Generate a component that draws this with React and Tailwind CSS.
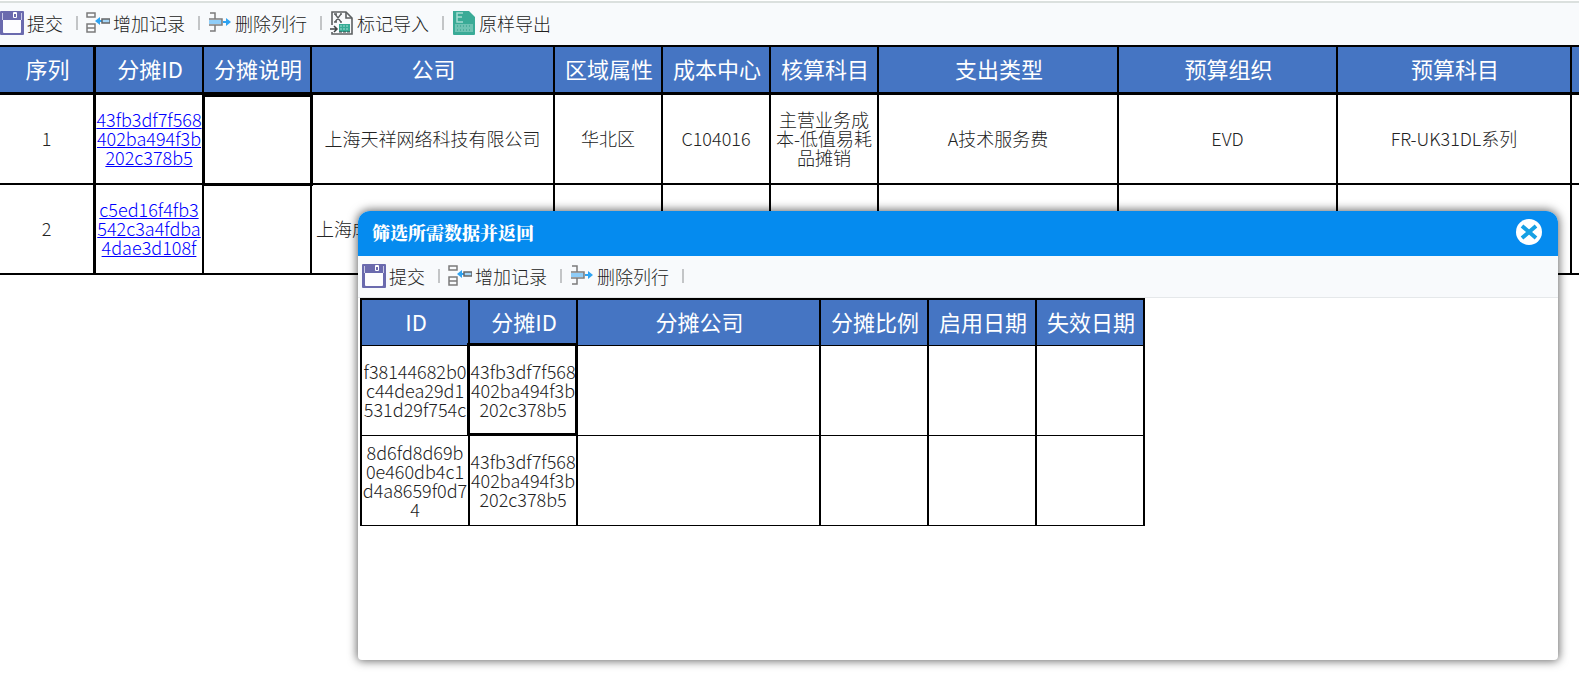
import React from 'react';

const SaveIcon = () => (
  <svg width="24" height="24" viewBox="0 0 24 24" aria-hidden="true">
    <rect width="24" height="24" rx="1" fill="#6a6aae" />
    <path d="M2 2h1v7H2zM21 2h1v7h-1z" fill="#c9c9e6" />
    <path d="M3 9h18v12a1 1 0 0 1-1 1H4a1 1 0 0 1-1-1z" fill="#fdfdff" />
    <rect x="13" y="1" width="4" height="6" rx="1" fill="#fff" />
    <rect x="14" y="3" width="2" height="3" fill="#6a6aae" />
  </svg>
);

const InsertIcon = () => (
  <svg width="24" height="24" viewBox="0 0 24 24" fill="none" aria-hidden="true">
    <path d="M1 2h8v4H1zM1 13h8v4H1zM1 17h8v4H1z" stroke="#7b7b7b" strokeWidth="1.5" />
    <path d="M12 10h4" stroke="#2ea3f2" strokeWidth="2" />
    <path d="M9 10l5-4v8z" fill="#2ea3f2" />
    <rect x="16" y="8" width="8" height="4" fill="#a5d5f7" stroke="#666" strokeWidth="1.5" />
  </svg>
);

const RemoveIcon = () => (
  <svg width="24" height="24" viewBox="0 0 24 24" fill="none" aria-hidden="true">
    <path d="M2 2h5v6M2 20h5v-6" stroke="#7b7b7b" strokeWidth="1.5" />
    <path d="M1 9h13v4H1z" fill="#8fcdf8" />
    <path d="M1 8h13v6H1" stroke="#7b7b7b" strokeWidth="1.5" />
    <path d="M15 11h4" stroke="#2ea3f2" strokeWidth="2" />
    <path d="M23 11l-5-4v8z" fill="#2ea3f2" />
  </svg>
);

const ImportIcon = () => (
  <svg width="24" height="24" viewBox="0 0 24 24" fill="none" aria-hidden="true">
    <path d="M2 14V1h14l6 6v16H2v-2" stroke="#5c6062" strokeWidth="1.6" />
    <path d="M16 1v6h6" stroke="#5c6062" strokeWidth="1.6" />
    <path d="M5 3l6 8M11 3l-6 8M4 3h3M10 3h2M4 11h3M10 11h2" stroke="#5c6062" strokeWidth="1.3" />
    <path d="M0 18h7M4 15l3 3-3 3" stroke="#3f4345" strokeWidth="1.5" />
    <rect x="9" y="13" width="11" height="8" fill="#35ab95" />
    <path d="M10 15h9M10 18h9" stroke="#a4ddd2" strokeDasharray="2 1" />
    <path d="M9 21h11" stroke="#3f4345" strokeDasharray="3 1" />
  </svg>
);

const ExportIcon = () => (
  <svg width="24" height="24" viewBox="0 0 24 24" fill="none" aria-hidden="true">
    <path d="M1 0h16l6 6v17a1 1 0 0 1-1 1H2a1 1 0 0 1-1-1z" fill="#3aab97" />
    <path d="M11 2H5v9h6M5 6h5" stroke="#a5ddd2" strokeWidth="1.5" />
    <rect x="3" y="13" width="18" height="8" fill="#6fc3b3" />
    <path d="M5 15h15M5 19h15" stroke="#2f9a87" strokeDasharray="1 2" />
  </svg>
);

const baseActions = [
  { label: '提交', icon: SaveIcon },
  { label: '增加记录', icon: InsertIcon },
  { label: '删除列行', icon: RemoveIcon },
];

const pageActions = [
  ...baseActions,
  { label: '标记导入', icon: ImportIcon },
  { label: '原样导出', icon: ExportIcon },
];

const columns = [
  { label: '序列', width: 'w-[96px]', border: 'border-r-3' },
  { label: '分摊ID', width: 'w-[108px]', border: 'border-r-2' },
  { label: '分摊说明', width: 'w-[108px]', border: 'border-r-2' },
  { label: '公司', width: 'w-[243px]', border: 'border-r-2' },
  { label: '区域属性', width: 'w-[108px]', border: 'border-r-2' },
  { label: '成本中心', width: 'w-[108px]', border: 'border-r-2' },
  { label: '核算科目', width: 'w-[108px]', border: 'border-r-2' },
  { label: '支出类型', width: 'w-[240px]', border: 'border-r-2' },
  { label: '预算组织', width: 'w-[219px]', border: 'border-r-2' },
  { label: '预算科目', width: 'w-[234px]', border: 'border-r-2' },
  { label: '', width: 'w-[108px]', border: 'border-r-2' },
];

const rows = [
  ['1', '43fb3df7f568\n402ba494f3b\n202c378b5', '', '上海天祥网络科技有限公司', '华北区', 'C104016', '主营业务成\n本-低值易耗\n品摊销', 'A技术服务费', 'EVD', 'FR-UK31DL系列', ''],
  ['2', 'c5ed16f4fb3\n542c3a4fdba\n4dae3d108f', '', '上海成', '', '', '', '', '', '', ''],
];

const dialogColumns = [
  { label: 'ID', width: 'w-[110px]' },
  { label: '分摊ID', width: 'w-[108px]' },
  { label: '分摊公司', width: 'w-[243px]' },
  { label: '分摊比例', width: 'w-[108px]' },
  { label: '启用日期', width: 'w-[108px]' },
  { label: '失效日期', width: 'w-[108px]' },
];

const dialogRows = [
  ['f38144682b0\nc44dea29d1\n531d29f754c', '43fb3df7f568\n402ba494f3b\n202c378b5', '', '', '', ''],
  ['8d6fd8d69b\n0e460db4c1\nd4a8659f0d7\n4', '43fb3df7f568\n402ba494f3b\n202c378b5', '', '', '', ''],
];

const Toolbar = ({ actions, trailing }) => (
  <div className="flex items-center pb-0.5 text-lg leading-6 font-light text-[#222]">
    {actions.map(({ label, icon: Icon }, i) => (
      <React.Fragment key={label}>
        {i > 0 && <span className="mr-2 ml-[13px] h-3.5 w-0.5 bg-[#c3c5c7]" />}
        <button type="button" className="flex items-center gap-[3px] whitespace-nowrap">
          <Icon />
          {label}
        </button>
      </React.Fragment>
    ))}
    {trailing && <span className="ml-[13px] h-3.5 w-0.5 bg-[#c3c5c7]" />}
  </div>
);

const MainTable = () => (
  <table className="w-[1680px] table-fixed border-separate border-spacing-0 border-t-2 border-black text-center">
    <thead>
      <tr className="h-12">
        {columns.map((col, i) => (
          <th
            key={i}
            scope="col"
            className={`${col.width} ${col.border} border-b-3 border-black bg-[#4575c3] p-0 pb-1 pl-0.5 text-[22px] leading-7 font-normal whitespace-nowrap text-white`}
          >
            {col.label}
          </th>
        ))}
      </tr>
    </thead>
    <tbody>
      {rows.map((row) => (
        <tr key={row[0]} className="h-[90px]">
          {row.map((cell, i) => (
            <td
              key={i}
              className={`${columns[i].border} relative border-b-2 border-black p-0 pb-0.5 text-lg leading-[19px] font-light whitespace-pre text-[#222] ${row[0] === '2' && i === 3 ? 'pl-1 text-left' : ''}`}
            >
              {i === 1 ? (
                <a href="#detail" className="text-[#0000ff] underline">{cell}</a>
              ) : (
                cell
              )}
              {/* Selected cell */}
              {row[0] === '1' && i === 2 && (
                <span className="absolute -top-px -right-[3px] -bottom-[3px] -left-0.5 border-3 border-black" />
              )}
            </td>
          ))}
        </tr>
      ))}
    </tbody>
  </table>
);

const DialogTable = () => (
  <table className="w-[785px] table-fixed border-separate border-spacing-0 text-center">
    <thead>
      <tr className="h-12">
        {dialogColumns.map((col) => (
          <th
            key={col.label}
            scope="col"
            className={`${col.width} border-t-2 border-r-2 border-b border-black bg-[#4575c3] p-0 pb-1 pl-0.5 text-[22px] leading-7 font-normal whitespace-nowrap text-white first:border-l-2`}
          >
            {col.label}
          </th>
        ))}
      </tr>
    </thead>
    <tbody>
      {dialogRows.map((row, r) => (
        <tr key={r} className="h-[90px]">
          {row.map((cell, i) => (
            <td
              key={i}
              className="relative border-r-2 border-b border-black p-0 text-lg leading-[19px] font-light whitespace-pre text-[#222] first:border-l-2"
            >
              {cell}
              {/* Selected cell */}
              {r === 0 && i === 1 && (
                <span className="absolute -top-[3px] -right-0.5 -bottom-px -left-[3px] border-3 border-black" />
              )}
            </td>
          ))}
        </tr>
      ))}
    </tbody>
  </table>
);

const FilterDialog = () => (
  <div
    role="dialog"
    aria-labelledby="dialog-title"
    className="absolute top-[211px] right-[21px] left-[358px] h-[449px] overflow-hidden rounded-t-xl rounded-b-sm bg-white shadow-[0_0_10px_1px_rgba(0,0,0,0.6)]"
  >
    <div className="flex h-[45px] items-center justify-between bg-[#058bef] pr-4 pb-1 pl-3.5">
      <h2 id="dialog-title" className="font-['Noto_Serif_CJK_SC','Noto_Sans_CJK_SC',serif] text-lg leading-6 font-black text-white">
        筛选所需数据并返回
      </h2>
      <button type="button" aria-label="关闭">
        <svg width="26" height="26" viewBox="0 0 26 26" fill="none">
          <circle cx="13" cy="13" r="13" fill="#fff" />
          <path d="M6 7l14 12M20 7L6 19" stroke="#16a0e4" strokeWidth="4" />
        </svg>
      </button>
    </div>
    <div className="flex h-[42px] items-center border-b border-[#e5e8ea] bg-[#f8fafc] pl-1">
      <Toolbar actions={baseActions} trailing />
    </div>
    <div className="pl-0.5">
      <DialogTable />
    </div>
  </div>
);

const App = () => {
  return (
    <div className="relative min-h-screen overflow-hidden bg-white font-['Noto_Sans_CJK_SC',sans-serif]">
      <div className="mt-px flex h-11 items-center border-t-2 border-[#dbe0de] bg-[#f8fafc]">
        <Toolbar actions={pageActions} />
      </div>
      <MainTable />
      <FilterDialog />
    </div>
  );
};

export default App;
